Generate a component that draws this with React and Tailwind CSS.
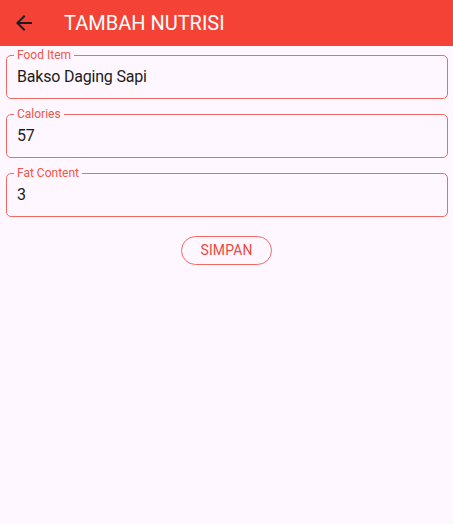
import { useState } from 'react';

const fields = [
  { label: 'Food Item', value: 'Bakso Daging Sapi' },
  { label: 'Calories', value: '57' },
  { label: 'Fat Content', value: '3' },
];

function OutlinedField({ label, value, onChange, first }) {
  return (
    <fieldset
      className={`ml-[6px] mr-[5px] ${first ? 'mt-[2px]' : 'mt-[8px]'} rounded-[5px] border border-[#f06c62] pl-[7px] pr-[10px]`}
    >
      <legend className="px-[3px] text-[12px] leading-[14px] text-[#f0544a]">{label}</legend>
      <input
        value={value}
        onChange={(e) => onChange(e.target.value)}
        className="mb-[8px] block h-[28px] w-full bg-transparent pl-[3px] text-[16px] tracking-[-0.2px] text-[#1d1b20] outline-none"
      />
    </fieldset>
  );
}

export default function App() {
  const [values, setValues] = useState(fields.map((f) => f.value));

  return (
    <div className="min-h-[524px] bg-[#fef7ff] font-['Roboto',sans-serif]">
      <header className="flex h-[46px] items-center bg-[#f44336]">
        <button className="ml-[12px] flex h-[24px] w-[24px] items-center justify-center">
          <svg viewBox="0 0 24 24" width="24" height="24" fill="#1d1b20">
            <path d="M20 11H7.83l5.59-5.59L12 4l-8 8 8 8 1.41-1.41L7.83 13H20v-2z" />
          </svg>
        </button>
        <h1 className="ml-[28px] text-[20px] leading-none text-white">TAMBAH NUTRISI</h1>
      </header>

      {fields.map((f, i) => (
        <OutlinedField
          key={f.label}
          first={i === 0}
          label={f.label}
          value={values[i]}
          onChange={(v) => setValues(values.map((old, j) => (j === i ? v : old)))}
        />
      ))}

      <div className="mt-[19px] flex justify-center">
        <button className="h-[29px] w-[91px] rounded-full border border-[#f06c62] text-[14px] tracking-[0.1px] text-[#ec4a40]">
          SIMPAN
        </button>
      </div>
    </div>
  );
}
